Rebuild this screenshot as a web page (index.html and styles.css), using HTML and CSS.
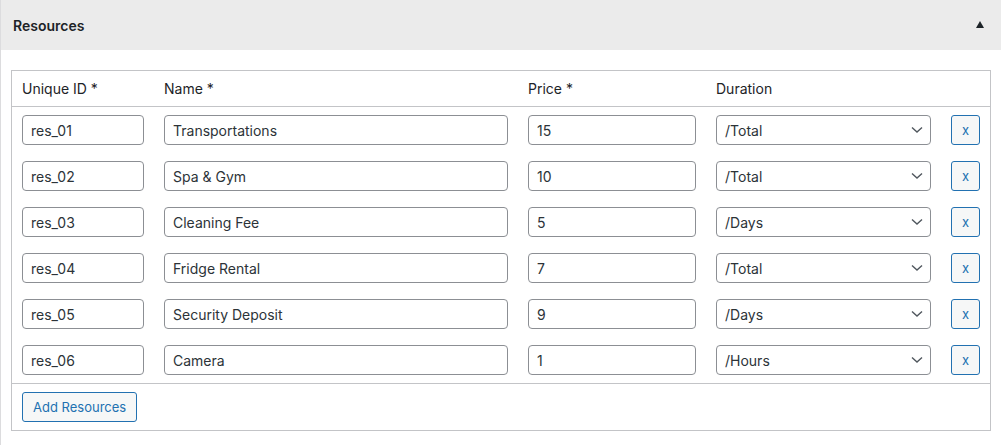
FILE: index.html
```html
<!DOCTYPE html>
<html>
<head>
    <title>Resources</title>
    <link rel="stylesheet" href="styles.css">
    <meta charset="UTF-8">
</head>
<body>
    <div class="postbox">
        <div class="postbox-header">
            <h2>Resources</h2>
            <span class="toggle-arrow"></span>
        </div>

        <div class="inside">
            <div class="resources-table">
                <div class="row head">
                    <div class="cell">Unique ID *</div>
                    <div class="cell">Name *</div>
                    <div class="cell">Price *</div>
                    <div class="cell">Duration</div>
                    <div class="cell"></div>
                </div>

                <div class="row">
                    <div class="cell"><input type="text" value="res_01"></div>
                    <div class="cell"><input type="text" value="Transportations"></div>
                    <div class="cell"><input type="text" value="15"></div>
                    <div class="cell">
                        <select><option>/Total</option><option>/Days</option><option>/Hours</option></select>
                    </div>
                    <div class="cell"><button class="remove-btn">x</button></div>
                </div>

                <div class="row">
                    <div class="cell"><input type="text" value="res_02"></div>
                    <div class="cell"><input type="text" value="Spa &amp; Gym"></div>
                    <div class="cell"><input type="text" value="10"></div>
                    <div class="cell">
                        <select><option>/Total</option><option>/Days</option><option>/Hours</option></select>
                    </div>
                    <div class="cell"><button class="remove-btn">x</button></div>
                </div>

                <div class="row">
                    <div class="cell"><input type="text" value="res_03"></div>
                    <div class="cell"><input type="text" value="Cleaning Fee"></div>
                    <div class="cell"><input type="text" value="5"></div>
                    <div class="cell">
                        <select><option>/Days</option><option>/Total</option><option>/Hours</option></select>
                    </div>
                    <div class="cell"><button class="remove-btn">x</button></div>
                </div>

                <div class="row">
                    <div class="cell"><input type="text" value="res_04"></div>
                    <div class="cell"><input type="text" value="Fridge Rental"></div>
                    <div class="cell"><input type="text" value="7"></div>
                    <div class="cell">
                        <select><option>/Total</option><option>/Days</option><option>/Hours</option></select>
                    </div>
                    <div class="cell"><button class="remove-btn">x</button></div>
                </div>

                <div class="row">
                    <div class="cell"><input type="text" value="res_05"></div>
                    <div class="cell"><input type="text" value="Security Deposit"></div>
                    <div class="cell"><input type="text" value="9"></div>
                    <div class="cell">
                        <select><option>/Days</option><option>/Total</option><option>/Hours</option></select>
                    </div>
                    <div class="cell"><button class="remove-btn">x</button></div>
                </div>

                <div class="row">
                    <div class="cell"><input type="text" value="res_06"></div>
                    <div class="cell"><input type="text" value="Camera"></div>
                    <div class="cell"><input type="text" value="1"></div>
                    <div class="cell">
                        <select><option>/Hours</option><option>/Total</option><option>/Days</option></select>
                    </div>
                    <div class="cell"><button class="remove-btn">x</button></div>
                </div>

                <div class="table-footer">
                    <button class="add-btn">Add Resources</button>
                </div>
            </div>
        </div>
    </div>
</body>
</html>
```

FILE: styles.css
```css
body {
    font-family: Inter, "Noto Sans", sans-serif;
    font-size: 14px;
    color: #1d2327;
    background-color: #fff;
    margin: 0;
    padding: 0;
}

.postbox {
    border-left: 1px solid #dcdcde;
    min-height: 445px;
}

.postbox-header {
    display: flex;
    align-items: center;
    justify-content: space-between;
    height: 50px;
    padding: 0 17px 0 12px;
    background-color: #ebebeb;
}

.postbox-header h2 {
    margin: 0;
    font-size: 14px;
    font-weight: 600;
}

.toggle-arrow {
    width: 0;
    height: 0;
    border-left: 4px solid transparent;
    border-right: 4px solid transparent;
    border-bottom: 7px solid #1d2327;
    margin-top: -2px;
}

.inside {
    padding: 20px 10px 0 10px;
}

.resources-table {
    border: 1px solid #c3c4c7;
}

.row {
    display: grid;
    grid-template-columns: 142px 364px 188px 235px 1fr;
    align-items: center;
    padding: 8px 0;
}

.row.head {
    height: 35px;
    padding: 0;
    border-bottom: 1px solid #c3c4c7;
}

.cell {
    padding: 0 10px;
}

input[type="text"],
select {
    width: 100%;
    height: 30px;
    box-sizing: border-box;
    border: 1px solid #8c8f94;
    border-radius: 4px;
    padding: 0 8px;
    font-family: inherit;
    font-size: 14px;
    color: #2c3338;
    background-color: #fff;
    margin: 0;
}

select {
    -webkit-appearance: none;
    appearance: none;
    padding: 0 24px 0 8px;
    background: #fff url("data:image/svg+xml;charset=US-ASCII,%3Csvg%20width%3D%2212%22%20height%3D%228%22%20xmlns%3D%22http%3A%2F%2Fwww.w3.org%2F2000%2Fsvg%22%3E%3Cpath%20d%3D%22M1%201.5l5%204.5%205-4.5%22%20fill%3D%22none%22%20stroke%3D%22%2350575e%22%20stroke-width%3D%221.4%22%2F%3E%3C%2Fsvg%3E") no-repeat right 7px center;
    background-size: 12px 8px;
}

button {
    font-family: inherit;
    cursor: pointer;
    border: 1px solid #2271b1;
    border-radius: 3px;
    background-color: #f6f7f7;
    color: #2271b1;
    height: 30px;
    box-sizing: border-box;
}

.remove-btn {
    width: 29px;
    padding: 0;
    font-size: 13px;
}

.table-footer {
    border-top: 1px solid #c3c4c7;
    padding: 8px 10px;
}

.add-btn {
    padding: 0 10px;
    font-size: 13px;
}
```
